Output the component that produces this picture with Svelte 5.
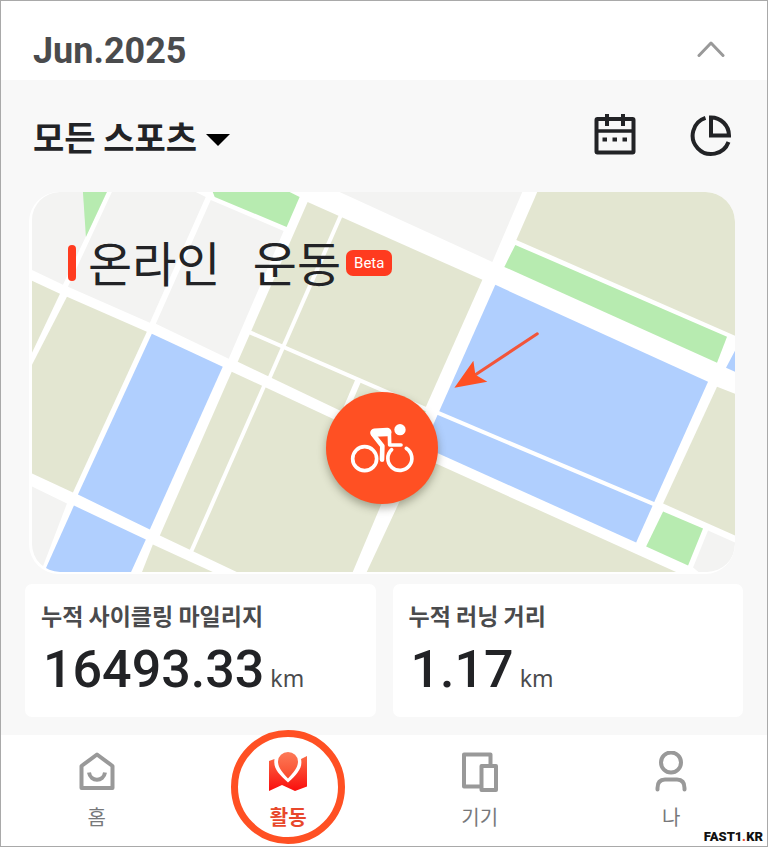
<script>
  const sports = ['모든 스포츠', '사이클링', '러닝'];

  const stats = [
    { label: '누적 사이클링 마일리지', value: '16493.33', unit: 'km' },
    { label: '누적 러닝 거리', value: '1.17', unit: 'km' }
  ];

  const tabs = [
    { id: 'home', label: '홈' },
    { id: 'activity', label: '활동' },
    { id: 'device', label: '기기' },
    { id: 'me', label: '나' }
  ];

  // City blocks, the white gaps between them are the roads
  const blocks = [
    { kind: 'plain', points: '32,192 107,192 63,285 32,270' },
    { kind: 'park', points: '83,192 107,192 86,237' },
    { kind: 'plain', points: '112,192 196,192 206,197 150,323 68,287' },
    { kind: 'plain', points: '211,200 284,231 229,359 156,324' },
    { kind: 'park', points: '213,192 290,192 300,197 287,227 215,197' },
    { kind: 'plain', points: '340,192 523,192 493,262' },
    { kind: 'land', points: '538,192 736,192 736,336 517,240' },
    { kind: 'park', points: '516,245 728,337 718,363 505,267' },
    { kind: 'water', points: '736,351 727,368 736,372' },
    { kind: 'land', points: '32,281 60,294 32,353' },
    { kind: 'land', points: '67,297 147,332 73,493 32,474 32,365' },
    { kind: 'water', points: '152,334 223,367 150,530 78,495' },
    { kind: 'plain', points: '32,487 67,504 41,572 32,572' },
    { kind: 'water', points: '74,506 146,540 131,573 44,573' },
    { kind: 'land', points: '308,202 483,280 410,444 238,362' },
    { kind: 'park', points: '420,406 428,409 422,418' },
    { kind: 'land', points: '232,372 404,452 353,573 238,573 160,536' },
    { kind: 'land', points: '153,545 214,573 142,573' },
    { kind: 'land', points: '367,573 421,457 678,573' },
    { kind: 'water', points: '496,285 709,382 637,543 424,447' },
    { kind: 'land', points: '718,387 736,394 736,536 664,504' },
    { kind: 'park', points: '664,512 704,529 689,566 647,547' },
    { kind: 'plain', points: '709,531 736,543 736,573 700,573 694,568' }
  ];

  let sport = $state(sports[0]);
  let activeTab = $state('activity');
</script>

<div class="app">
  <header class="month">
    <h1>Jun.2025</h1>
    <button class="icon-button" aria-label="접기">
      <svg width="28" height="18" viewBox="0 0 28 18" fill="none" stroke="#999" stroke-width="3" stroke-linecap="round" stroke-linejoin="round">
        <path d="M2 15.5 L14 3 L26 15.5" />
      </svg>
    </button>
  </header>

  <main>
    <div class="toolbar">
      <label class="sport">
        <select bind:value={sport} aria-label="스포츠">
          {#each sports as name}
            <option>{name}</option>
          {/each}
        </select>
        <svg width="24" height="12" viewBox="0 0 24 12"><path d="M0 0H24L12 12Z" /></svg>
      </label>
      <div class="actions">
        <button class="icon-button" aria-label="달력">
          <svg width="42" height="44" viewBox="0 1 42 44" fill="none" stroke="#222326">
            <rect x="2.5" y="6" width="37" height="33.5" rx="1" stroke-width="4" />
            <path d="M2 18H40" stroke-width="3.5" />
            <path d="M13 1V13M29 1V13" stroke-width="4" />
            <path d="M8.500 26.500h4.500M18.500 26.500h4.500M28.500 26.500h4.500" stroke-width="4" />
          </svg>
        </button>
        <button class="icon-button" aria-label="통계">
          <svg width="42" height="44" viewBox="0 -1 42 44" fill="none" stroke="#222326" stroke-width="4">
            <path d="M15.500 2.900 A18.500 18.500 0 1 0 38.500 27" />
            <path d="M21 2.500 A18 18 0 0 1 39 20.500 H21 Z" />
          </svg>
        </button>
      </div>
    </div>

    <section class="map">
      <svg class="streets" viewBox="32 192 704 381" aria-hidden="true">
        {#each blocks as block}
          <polygon class={block.kind} points={block.points} />
        {/each}
        <g stroke="#fff" stroke-width="4">
          <path d="M341 216L270 378" />
          <path d="M249 332L430 411" />
          <path d="M359 380L347 408" stroke-width="6" />
          <path d="M265 385L191 553" />
          <path d="M438 413L656 505" />
        </g>
        <path d="M538 334L476 375" stroke="#f2553a" stroke-width="3" stroke-linecap="round" />
        <path d="M455 388L474 361L476 375L488 382Z" fill="#ff5023" />
      </svg>
      <div class="map-title">
        <span class="mark"></span>
        <h2>온라인&nbsp;&nbsp;&nbsp;운동</h2>
        <span class="beta">Beta</span>
      </div>
      <button class="ride" aria-label="사이클링">
        <svg width="65" height="50" viewBox="90 115 195 150" fill="none" stroke="#fff" stroke-linecap="round" stroke-linejoin="round">
          <circle cx="134" cy="222" r="36" stroke-width="11" />
          <path d="M215 195 A36 36 0 1 0 259 191" stroke-width="11" />
          <circle cx="240" cy="135" r="17" fill="#fff" stroke="none" />
          <path d="M163 144L202 142" stroke-width="25" />
          <path d="M208 142L209 181L243 181" stroke-width="11" />
          <path d="M160 150L187 184L186 225" stroke-width="14" />
        </svg>
      </button>
    </section>

    <section class="stats">
      {#each stats as stat}
        <div class="card">
          <h3>{stat.label}</h3>
          <p><strong>{stat.value}</strong><span>{stat.unit}</span></p>
        </div>
      {/each}
    </section>
  </main>

  <nav>
    {#each tabs as tab (tab.id)}
      <button class="tab" class:active={activeTab === tab.id} onclick={() => (activeTab = tab.id)}>
        <svg width="42" height="42" viewBox="0 0 42 42" fill="none" stroke="#999" stroke-width="4" stroke-linecap="round" stroke-linejoin="round">
          {#if tab.id === 'home'}
            <path d="M5.500 15L21 3.500L36.500 15V37H5.500Z" />
            <path d="M13 21.500C14.500 31 27.500 31 29 21.500" stroke-linecap="butt" />
          {:else if tab.id === 'activity'}
            <defs>
              <linearGradient id="sheet" x1="0" y1="0" x2="0" y2="1">
                <stop offset="0" stop-color="#fb6a45" />
                <stop offset="1" stop-color="#fa0d0d" />
              </linearGradient>
              <linearGradient id="pin" x1="0" y1="0" x2="0" y2="1">
                <stop offset="0" stop-color="#fd7a58" />
                <stop offset="1" stop-color="#f94a2c" />
              </linearGradient>
            </defs>
            <path d="M2 10L7.500 8C6 18 12 23 21 31.500C30 23 36 17 34 8L40 5V35.500L28 40L15 34L2 40Z" fill="url(#sheet)" stroke="none" />
            <path d="M21 27.500C16 22 11 17 11 10.500A10 9.500 0 0 1 31 10.500C31 17 26 22 21 27.500Z" fill="url(#pin)" stroke="none" />
          {:else if tab.id === 'device'}
            <path d="M22 35.500H5V3.500H31.500V15" />
            <path d="M22.500 15H37V39H22.500Z" />
          {:else}
            <circle cx="21" cy="11.500" r="10" />
            <path d="M7.500 38.500V37C7.500 31 10 28.500 15 28.500H27C32 28.500 34.500 31 34.500 37V38.500" />
          {/if}
        </svg>
        <span>{tab.label}</span>
      </button>
    {/each}
  </nav>
  <span class="credit">FAST1<i>.</i>KR</span>
</div>

<style>
  :global(body) {
    margin: 0;
  }

  .app {
    position: relative;
    border: 1px solid #a9a9a9;
    background: #f8f8f8;
    color: #222326;
    font-family: 'Noto Sans CJK KR', sans-serif;
  }

  h1,
  h2,
  h3,
  p {
    margin: 0;
  }

  button {
    padding: 0;
    border: 0;
    background: none;
    font-family: inherit;
    cursor: pointer;
  }

  svg {
    display: block;
  }

  .month {
    display: flex;
    align-items: center;
    justify-content: space-between;
    padding: 20px 42px 3px 32px;
    background: #fff;
  }

  h1 {
    padding-top: 4px;
    color: #4a4b4d;
    font: 700 36px/52px Roboto, sans-serif;
  }

  .toolbar {
    display: flex;
    align-items: center;
    justify-content: space-between;
    padding: 33px 35px 33px 32px;
  }

  .sport {
    display: flex;
    align-items: center;
    gap: 9px;
  }

  select {
    appearance: none;
    field-sizing: content;
    padding: 2px 0 0;
    border: 0;
    background: none;
    color: #222326;
    font: 700 34px/44px 'Noto Sans CJK KR', sans-serif;
  }

  .sport svg {
    margin-top: 8px;
  }

  .actions {
    display: flex;
    gap: 54px;
  }

  .map {
    position: relative;
    margin: 0 32px 0 28px;
    padding: 0 0 2px 3px;
    border-radius: 30px;
    background: #fff;
    overflow: hidden;
  }

  .streets {
    width: 100%;
    border-radius: 28px;
  }

  .plain {
    fill: #f3f3f2;
  }

  .park {
    fill: #b7ebb0;
  }

  .land {
    fill: #e3e6d1;
  }

  .water {
    fill: #b0cffe;
  }

  .map-title {
    position: absolute;
    top: 42px;
    left: 39px;
    display: flex;
    align-items: center;
  }

  .mark {
    width: 8px;
    height: 36px;
    margin-right: 12px;
    border-radius: 4px;
    background: #ff3b1f;
  }

  h2 {
    padding-bottom: 4px;
    font-size: 48px;
    font-weight: 400;
    line-height: 54px;
  }

  .beta {
    margin-left: 5px;
    padding: 0 8px;
    border-radius: 7px;
    background: #ff3b1f;
    color: #fff;
    font: 400 15px/26px Roboto, sans-serif;
  }

  .ride {
    position: absolute;
    top: 67%;
    left: 50%;
    display: grid;
    place-items: center;
    width: 112px;
    height: 112px;
    border-radius: 50%;
    background: #ff5023;
    box-shadow: 0 4px 8px rgba(60, 60, 40, 0.4);
    transform: translate(-50%, -50%);
  }

  .stats {
    display: grid;
    grid-template-columns: 1fr 1fr;
    gap: 17px;
    padding: 10px 24px 18px;
  }

  .card {
    padding: 14px 16px;
    border-radius: 7px;
    background: #fff;
  }

  h3 {
    color: #4a4b4d;
    font-size: 23px;
    font-weight: 700;
    line-height: 34px;
  }

  .card p {
    display: flex;
    align-items: baseline;
    gap: 6px;
    padding: 5px 0 0 2px;
  }

  strong {
    font: 500 52px/66px Roboto, sans-serif;
  }

  .card span {
    color: #4a4b4d;
    font: 400 23px/30px 'Noto Sans', sans-serif;
  }

  nav {
    display: grid;
    grid-template-columns: repeat(4, 1fr);
    background: #fff;
  }

  .tab {
    position: relative;
    display: flex;
    flex-direction: column;
    align-items: center;
    gap: 9px;
    padding: 16px 0 14px;
    color: #77787a;
    font-size: 20px;
    line-height: 30px;
  }

  .tab.active {
    color: #e8472b;
    font-weight: 700;
  }

  .tab.active::after {
    content: '';
    position: absolute;
    top: -5px;
    left: 50%;
    width: 100px;
    height: 100px;
    border: 7px solid #ff5023;
    border-radius: 50%;
    transform: translateX(-50%);
  }

  .credit {
    position: absolute;
    right: 4px;
    bottom: 0;
    color: #111;
    font: 900 13px/18px Roboto, sans-serif;
  }

  .credit i {
    color: #e8472b;
  }
</style>
